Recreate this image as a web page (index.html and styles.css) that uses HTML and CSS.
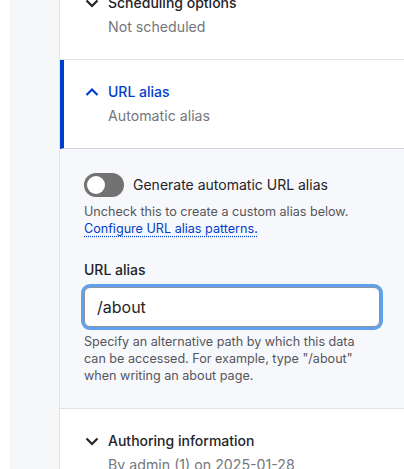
FILE: index.html
```html
<!DOCTYPE html>
<html lang="en">
<head>
    <meta charset="UTF-8">
    <meta name="viewport" content="width=device-width, initial-scale=1.0">
    <title>Node edit sidebar</title>
    <link rel="stylesheet" href="styles.css">
</head>
<body>

<div class="page">
    <div class="gutter"></div>

    <div class="sidebar">
        <details class="panel">
            <summary>
                <svg class="chevron" viewBox="0 0 16 20"><path d="M2.5 7.5l5.5 5.5 5.5-5.5"/></svg>
                <span class="summary-title">Scheduling options</span>
                <span class="summary-meta">Not scheduled</span>
            </summary>
        </details>

        <details class="panel" open>
            <summary>
                <svg class="chevron" viewBox="0 0 16 20"><path d="M2.5 13l5.5-5.5 5.5 5.5"/></svg>
                <span class="summary-title">URL alias</span>
                <span class="summary-meta">Automatic alias</span>
            </summary>

            <div class="panel-body">
                <label class="toggle-row">
                    <span class="switch"><span class="knob"></span></span>
                    <span class="toggle-label">Generate automatic URL alias</span>
                </label>
                <p class="description">
                    Uncheck this to create a custom alias below.<br>
                    <a href="#" class="link">Configure URL alias patterns.</a>
                </p>

                <label class="field-label" for="alias">URL alias</label>
                <input type="text" id="alias" class="text-input is-focused" value="/about" autofocus>
                <p class="description">
                    Specify an alternative path by which this data can be accessed. For example, type "/about" when writing an about page.
                </p>
            </div>
        </details>

        <details class="panel">
            <summary>
                <svg class="chevron" viewBox="0 0 16 20"><path d="M2.5 7.5l5.5 5.5 5.5-5.5"/></svg>
                <span class="summary-title">Authoring information</span>
                <span class="summary-meta">By admin (1) on 2025-01-28</span>
            </summary>
        </details>
    </div>
</div>

</body>
</html>
```

FILE: styles.css
```css
body {
    margin: 0;
    font-family: Inter, "Noto Sans", sans-serif;
    background-color: #fff;
    color: #232429;
    overflow: hidden;
}
.page {
    display: flex;
    min-height: 100vh;
}
.gutter {
    flex: none;
    width: 49px;
    margin-left: 10px;
    background-color: #f6f7f9;
    border-right: 1px solid #e4e5e9;
}
.sidebar {
    flex: 1;
    margin-top: -29px;
}
.panel {
    border-bottom: 1px solid #e2e3e7;
}
.panel summary {
    display: grid;
    grid-template-columns: 16px 1fr;
    column-gap: 8px;
    row-gap: 4px;
    padding: 22px 24px;
    list-style: none;
    cursor: pointer;
}
.panel summary::-webkit-details-marker {
    display: none;
}
.panel[open] summary {
    border-left: 4px solid #003ecc;
    padding-left: 20px;
    border-bottom: 1px solid #d3d4d9;
}
.chevron {
    width: 16px;
    height: 20px;
    fill: none;
    stroke: #232429;
    stroke-width: 2.2;
}
.panel[open] .chevron {
    stroke: #003ecc;
}
.summary-title {
    font-size: 14px;
    line-height: 20px;
    font-weight: 500;
}
.panel[open] .summary-title {
    color: #003ecc;
}
.summary-meta {
    grid-column: 2;
    font-size: 14.2px;
    line-height: 20px;
    color: #75767c;
}
.panel-body {
    background-color: #f7f8fb;
    padding: 24px 24px 24px;
}
.toggle-row {
    display: flex;
    align-items: center;
    gap: 9px;
}
.switch {
    display: flex;
    align-items: center;
    width: 40px;
    height: 24px;
    padding: 3px;
    box-sizing: border-box;
    border-radius: 12px;
    background-color: #727272;
}
.knob {
    width: 18px;
    height: 18px;
    border-radius: 50%;
    background-color: #fff;
}
.toggle-label {
    font-size: 14px;
    line-height: 20px;
}
.description {
    max-width: 280px;
    margin: 6px 0 0;
    font-size: 12.6px;
    line-height: 17px;
    color: #55565b;
}
.link {
    color: #003ecc;
    text-decoration: underline dotted;
    text-underline-offset: 3px;
}
.field-label {
    display: block;
    margin-top: 23px;
    font-size: 14px;
    line-height: 20px;
    font-weight: 500;
}
.text-input {
    display: block;
    width: 100%;
    height: 40px;
    margin-top: 7px;
    padding: 0 12px;
    box-sizing: border-box;
    border: 1px solid #8e929c;
    border-radius: 6px;
    font-family: inherit;
    font-size: 16px;
    color: #232429;
    background-color: #fff;
    outline: none;
}
.text-input.is-focused {
    box-shadow: 0 0 0 3px #5ea2ee;
}
```
